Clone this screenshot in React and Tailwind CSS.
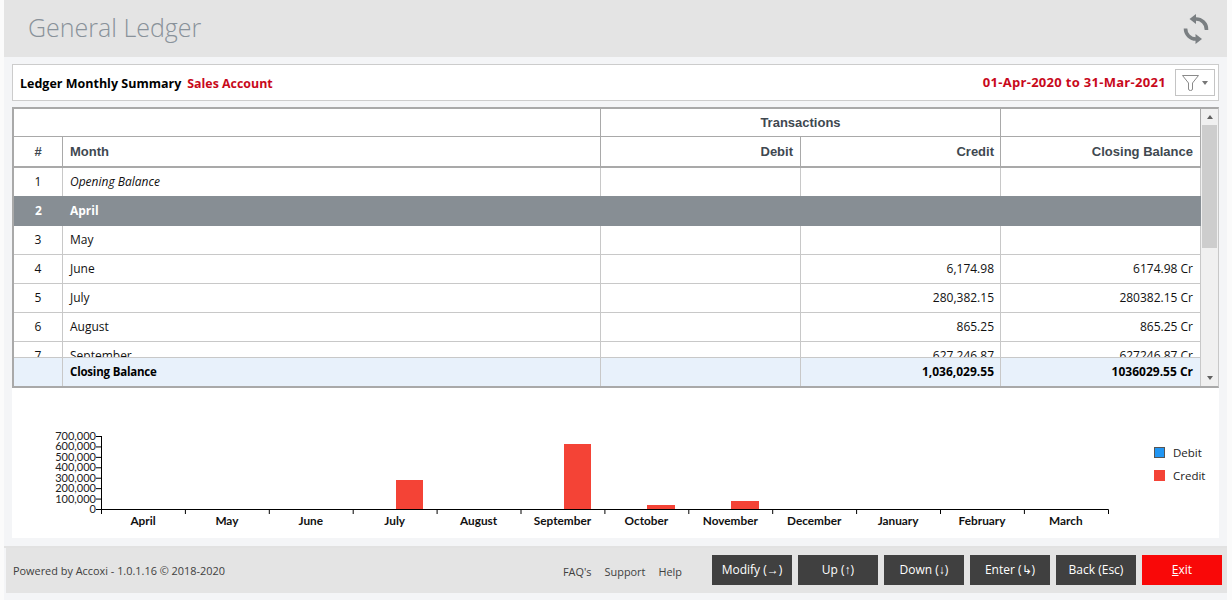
import React from "react";

const COLS = "grid-cols-[49px_538px_200px_200px_200px]";
const rows = [
  ["1", "Opening Balance", "", "", "", "italic"],
  ["2", "April", "", "", "", "active"],
  ["3", "May", "", "", ""],
  ["4", "June", "", "6,174.98", "6174.98 Cr"],
  ["5", "July", "", "280,382.15", "280382.15 Cr"],
  ["6", "August", "", "865.25", "865.25 Cr"],
  ["7", "September", "", "627,246.87", "627246.87 Cr"],
];
const months = ["April","May","June","July","August","September","October","November","December","January","February","March"];
const bars = [[396,480,29,27],[564,444,65,27],[647,505,4,28],[731,501,8,28]];
const yLabels = ["700,000","600,000","500,000","400,000","300,000","200,000","100,000","0"];

function Row({ r }) {
  const active = r[5] === "active";
  const italic = r[5] === "italic";
  const cell = active ? "" : "border-r border-[#c8c8c8]";
  return (
    <div className={`grid ${COLS} items-stretch ${active ? "h-[30px] -mt-[1px] bg-[#878e94] text-white font-bold" : "h-[29px] border-b border-[#c8c8c8] bg-white text-[#111]"}`}>
      <div className={`${cell} flex items-center justify-center`}>{r[0]}</div>
      <div className={`${cell} flex items-center px-[7px] ${italic ? "italic" : ""}`}>{r[1]}</div>
      <div className={`${cell} flex items-center justify-end px-[7px]`}>{r[2]}</div>
      <div className={`${cell} flex items-center justify-end px-[6px]`}>{r[3]}</div>
      <div className={`${cell} flex items-center justify-end px-[7px]`}>{r[4]}</div>
    </div>
  );
}

function FooterBtn({ children, red }) {
  return (
    <button className={`w-[80px] h-[30px] flex items-center justify-center pb-[1px] text-[12px] text-white ${red ? "bg-[#f90808]" : "bg-[#404040]"}`}>{children}</button>
  );
}

export default function App() {
  return (
    <div className="w-[1232px] h-[600px] overflow-hidden bg-[#fbfbfb] font-['Open_Sans',sans-serif] text-[12px] flex flex-col pl-[4px] pr-[5px]">
      <header className="h-[57px] shrink-0 bg-[#e4e4e4] flex items-center justify-between pl-[24px] pr-[18px]">
        <h1 className="text-[25px] font-light text-[#89929a] leading-none pb-[2px]">General Ledger</h1>
        <svg width="26" height="32" viewBox="0 0 26 32" fill="none" stroke="#7a7f82" strokeWidth="3.6">
          <path d="M12 6 A10.5 10.5 0 0 1 23.5 17" />
          <path d="M2.5 15.5 A10.5 10.5 0 0 0 13 26" />
          <path d="M6.5 6 L13 1 V11 Z" fill="#7a7f82" stroke="none" />
          <path d="M19 26 L12.5 21 V31 Z" fill="#7a7f82" stroke="none" />
        </svg>
      </header>

      <main className="flex-1 min-h-0 bg-[#f4f5f7] pl-[8px] pr-[8px] pt-[7px] flex flex-col border-b-2 border-b-[#e2e2e2]">
        <div className="h-[37px] shrink-0 bg-white border border-[#cccccc] flex items-center pl-[7px] pr-[3px]">
          <span className="font-bold text-[12.5px] text-black mt-[3px]">Ledger Monthly Summary</span>
          <span className="font-bold text-[12.4px] text-[#c8091b] ml-[6px] mt-[3px]">Sales Account</span>
          <span className="font-bold text-[13px] text-[#c8091b] ml-auto mr-[9px] mt-[1px] tracking-[0.3px]">01-Apr-2020 to 31-Mar-2021</span>
          <button className="w-[40px] h-[27px] border border-[#c4c4c4] flex items-center justify-center gap-[3.5px] bg-white">
            <svg width="17" height="16" viewBox="0 0 17 16" fill="none" stroke="#8a8a8a" strokeWidth="1">
              <path d="M0.5 0.5 H16.5 L10.5 8 V14 Q10.5 15.5 8.5 15.5 Q6.5 15.5 6.5 14 V8 Z" />
            </svg>
            <span className="w-0 h-0 border-x-[3.5px] border-x-transparent border-t-[4px] border-t-[#777]" />
          </button>
        </div>

        <div className="mt-[6px] shrink-0 flex border-t-2 border-l-2 border-b-2 border-[#a9a9a9] border-r border-r-[#c8c8c8] h-[281px] bg-white">
          <div className="w-[1187px] flex flex-col min-w-0">
            <div className={`grid ${COLS} h-[28px] shrink-0 border-b border-[#a9a9a9] font-bold text-[#404850] text-[13px] font-['Liberation_Sans',sans-serif]`}>
              <div className="col-span-2 border-r border-[#a9a9a9]" />
              <div className="col-span-2 border-r border-[#a9a9a9] flex items-center justify-center">Transactions</div>
              <div className="border-r border-[#a9a9a9]" />
            </div>
            <div className={`grid ${COLS} h-[31px] shrink-0 border-b-2 border-[#a9a9a9] font-bold text-[#404850] text-[13px] font-['Liberation_Sans',sans-serif]`}>
              <div className="border-r border-[#a9a9a9] flex items-center justify-center">#</div>
              <div className="border-r border-[#a9a9a9] flex items-center px-[7px]">Month</div>
              <div className="border-r border-[#a9a9a9] flex items-center justify-end px-[7px]">Debit</div>
              <div className="border-r border-[#a9a9a9] flex items-center justify-end px-[6px]">Credit</div>
              <div className="border-r border-[#a9a9a9] flex items-center justify-end px-[7px]">Closing Balance</div>
            </div>
            <div className="h-[189px] shrink-0 overflow-hidden">
              {rows.map((r) => <Row key={r[0]} r={r} />)}
            </div>
            <div className={`grid ${COLS} h-[29px] shrink-0 bg-[#e8f1fb] border-t border-[#c8c8c8] font-bold text-black`}>
              <div className="border-r border-[#c8c8c8]" />
              <div className="border-r border-[#c8c8c8] flex items-center px-[7px] text-[11.5px] tracking-[-0.2px]">Closing Balance</div>
              <div className="border-r border-[#c8c8c8]" />
              <div className="border-r border-[#c8c8c8] flex items-center justify-end px-[6px]">1,036,029.55</div>
              <div className="border-r border-[#c8c8c8] flex items-center justify-end px-[7px]">1036029.55 Cr</div>
            </div>
          </div>
          <div className="w-[17px] bg-[#f0f0f0] flex flex-col items-center">
            <div className="h-[16px] flex items-center justify-center">
              <span className="w-0 h-0 border-x-[3.5px] border-x-transparent border-b-[4px] border-b-[#606060]" />
            </div>
            <div className="w-[15px] h-[123px] bg-[#cdcdcd]" />
            <div className="flex-1" />
            <div className="h-[16px] flex items-center justify-center">
              <span className="w-0 h-0 border-x-[3.5px] border-x-transparent border-t-[4px] border-t-[#606060]" />
            </div>
          </div>
        </div>

        <div className="h-[150px] shrink-0 bg-white flex">
          <svg width="1135" height="150" viewBox="12 388 1135 150" className="shrink-0 font-['Lato',sans-serif]">
            {bars.map(([x, y, h, w]) => <rect key={x} x={x} y={y} width={w} height={h} fill="#f44336" />)}
            <path d="M101.5 436 V509.5 H1108.5 V514" fill="none" stroke="#000" strokeWidth="1" />
            {yLabels.map((l, i) => {
              const y = 436 + i * 10.43;
              return (
                <g key={l}>
                  <line x1="96" x2="101" y1={y + 0.5} y2={y + 0.5} stroke="#000" />
                  <text x="96" y={y + 4} textAnchor="end" fontSize="11" fill="#222">{l}</text>
                </g>
              );
            })}
            {months.map((m, i) => (
              <g key={m}>
                <line x1={101.5 + i * 83.9} x2={101.5 + i * 83.9} y1="509" y2="514" stroke="#000" />
                <text x={143 + i * 83.9} y="525" textAnchor="middle" fontSize="11.8" fontWeight="700" fill="#111">{m}</text>
              </g>
            ))}
          </svg>
          <div className="pt-[59px] pl-[7px] flex flex-col gap-[12px] text-[11.5px] text-[#222]">
            <div className="flex items-center gap-[8px] h-[11px]"><span className="w-[11px] h-[11px] bg-[#2196f3] border border-[#555]" />Debit</div>
            <div className="flex items-center gap-[8px] h-[11px]"><span className="w-[11px] h-[11px] bg-[#f44336]" />Credit</div>
          </div>
        </div>
      </main>

      <div className="bg-[#f4f5f7] shrink-0 pb-[7px] pl-[2px]">
        <footer className="h-[45px] bg-[#e4e4e4] flex items-start pt-[7px] pl-[7px] pr-[5px] text-[10.9px] text-[#404040]">
          <span className="mt-[8px]">Powered by Accoxi - 1.0.1.16 © 2018-2020</span>
          <div className="ml-auto flex items-center gap-[13px] mr-[30px] mt-[9px]">
            <span>FAQ's</span><span>Support</span><span>Help</span>
          </div>
          <div className="flex gap-[6px]">
            <FooterBtn>Modify (→)</FooterBtn>
            <FooterBtn>Up (↑)</FooterBtn>
            <FooterBtn>Down (↓)</FooterBtn>
            <FooterBtn>Enter (↳)</FooterBtn>
            <FooterBtn>Back (Esc)</FooterBtn>
            <FooterBtn red><span><u>E</u>xit</span></FooterBtn>
          </div>
        </footer>
      </div>
    </div>
  );
}
